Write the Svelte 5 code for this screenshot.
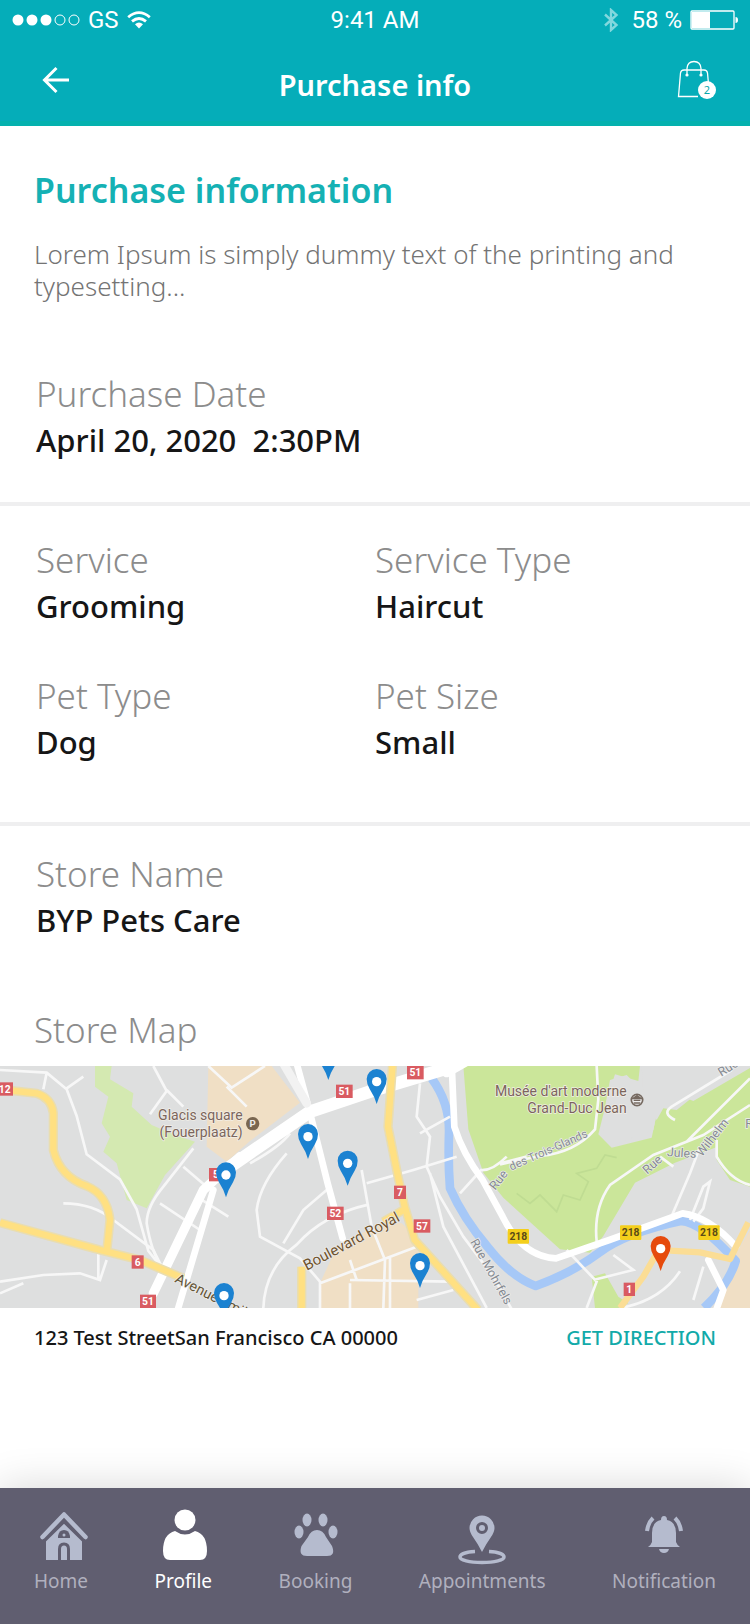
<script>
  const details = [
    { label: 'Service', value: 'Grooming' },
    { label: 'Service Type', value: 'Haircut' },
    { label: 'Pet Type', value: 'Dog' },
    { label: 'Pet Size', value: 'Small' }
  ];

  const tabs = [
    { id: 'home', label: 'Home' },
    { id: 'profile', label: 'Profile' },
    { id: 'booking', label: 'Booking' },
    { id: 'appointments', label: 'Appointments' },
    { id: 'notification', label: 'Notification' }
  ];
  let active = $state('profile');

  // Tip of each pin in map units
  const pins = [
    [678, 412], [672, 774], [985, 60], [1130, 132], [924, 297], [1043, 377], [1260, 684]
  ];
  const chosen = [1982, 633];

  const redBadges = [
    { x: 14, y: 87, w: 50, t: '12' },
    { x: 648, y: 344, w: 42, t: '5' },
    { x: 413, y: 606, w: 36, t: '6' },
    { x: 444, y: 724, w: 48, t: '51' },
    { x: 1033, y: 94, w: 50, t: '51' },
    { x: 1246, y: 38, w: 50, t: '51' },
    { x: 1200, y: 397, w: 36, t: '7' },
    { x: 1006, y: 460, w: 50, t: '52' },
    { x: 1266, y: 498, w: 50, t: '57' },
    { x: 1888, y: 688, w: 34, t: '1' }
  ];
  const yellowBadges = [
    { x: 1555, y: 529 }, { x: 1892, y: 518 }, { x: 2127, y: 518 }
  ];
</script>

<div class="page">
  <header>
    <div class="status">
      <div class="carrier">
        <svg width="68" height="14" viewBox="0 0 68 14" aria-hidden="true">
          <g fill="#fff"><circle cx="6" cy="7" r="5.5" /><circle cx="20" cy="7" r="5.5" /><circle cx="34" cy="7" r="5.5" /></g>
          <g fill="none" stroke="#fff"><circle cx="48" cy="7" r="5" /><circle cx="62" cy="7" r="5" /></g>
        </svg>
        <span>GS</span>
        <svg width="24" height="18" viewBox="0 0 24 18" aria-hidden="true">
          <g fill="none" stroke="#fff" stroke-width="2.8"><path d="M1.2 6.2Q12-3 22.8 6.2" /><path d="M5 10.4Q12 4.6 19 10.4" /></g>
          <path d="M8 13.2Q12 10 16 13.2L12 17.6Z" fill="#fff" />
        </svg>
      </div>
      <span class="clock">9:41 AM</span>
      <div class="power">
        <svg width="16" height="24" viewBox="0 0 16 24" aria-hidden="true">
          <path d="M2 6.5 13.5 17 8 22V2l5.5 5L2 17.5" fill="none" stroke="#82d8de" stroke-width="2.400" />
        </svg>
        <span>58 %</span>
        <svg width="48" height="20" viewBox="0 0 48 20" aria-hidden="true">
          <rect x="1" y="1" width="43" height="18" rx="1" fill="none" stroke="#fff" stroke-width="1.3" />
          <path d="M1.5 2h18.500v16h-18.500z" fill="#fff" />
          <path d="M45.500 7q2.500 0 2.500 3t-2.500 3z" fill="#fff" />
        </svg>
      </div>
    </div>
    <div class="bar">
      <button class="icon-button" aria-label="Back">
        <svg width="28" height="28" viewBox="0 0 28 28"><path d="M27 14H2.500M14.500 2 2.500 14l12 12" fill="none" stroke="#fff" stroke-width="3" /></svg>
      </button>
      <h1>Purchase info</h1>
      <button class="icon-button" aria-label="Shopping bag, 2 items">
        <svg width="40" height="40" viewBox="0 0 40 40">
          <g fill="none" stroke="#fff" stroke-width="1.300">
            <path d="M22 36.500H2.500L4.500 13q.5-3 3.500-3h20q3 0 3.500 3l1 11" />
            <path d="M11 15V8.500Q11.500 1.500 18 1.500T25 8.500V15" />
          </g>
          <circle cx="11" cy="15" r="1.600" fill="#fff" /><circle cx="25" cy="15" r="1.600" fill="#fff" />
          <circle cx="31" cy="30" r="9" fill="#fff" />
          <text x="31" y="34" text-anchor="middle" font-size="11" fill="#08a7ac">2</text>
        </svg>
      </button>
    </div>
  </header>

  <main>
    <section class="intro">
      <h2>Purchase information</h2>
      <p>Lorem Ipsum is simply dummy text of the printing and typesetting...</p>
      <dl>
        <dt>Purchase Date</dt>
        <dd>April 20, 2020&nbsp; 2:30PM</dd>
      </dl>
    </section>

    <section class="details">
      {#each details as item}
        <dl>
          <dt>{item.label}</dt>
          <dd>{item.value}</dd>
        </dl>
      {/each}
    </section>

    <section class="store">
      <dl>
        <dt>Store Name</dt>
        <dd>BYP Pets Care</dd>
      </dl>
      <h3>Store Map</h3>
    </section>

    <svg class="map" viewBox="0 18 2250 726" preserveAspectRatio="xMidYMid slice" role="img" aria-label="Store map">
      <rect y="18" width="2250" height="726" fill="#dedfdf" />
      <!-- Parks -->
      <g fill="#cbe69a">
        <path fill="#d4e9b1" d="M285 18h50l-5 40 70 42-5 40 60 55 70 30 60 20-90 100-55 100-60-25-30-110-40-35 20-45-25-40 20-80-40-30z" />
        <path d="M1390 18h530l-5 45-70-20-20 60-30 120 40 40 120-30 15-70 60-60 50 20 180-105h90v55l-95 65-70 110-160 60-120 60-95 160-40 50-90-10-170-155-60-75-45-130z" />
        <path d="M2250 70v310l-60-20-40-60v-60l50-80z" />
        <path d="M1775 650l40-10 40 70 30 20-30 14h-70z" />
      </g>
      <path d="M1830 60l50-15 60 60 30 55-10 50-115 42-35-30 5-80zM1925 18h270l-165 132-40-5-20 35-40-80z" fill="#dedfdf" />
      <path d="M1550 400l40 30 30-25 50 50 20-50 50 15 25-55-35-25 60-15 25-40 35 8" fill="none" stroke="#bfdc92" stroke-width="5" />
      <!-- Built-up blocks -->
      <g fill="#f0dfc5">
        <path d="M625 18h190l85 110-150 115-70 62-60-45z" />
        <path d="M1010 560l140-75 55 5 50 45v209H960v-74z" />
        <path d="M2250 510v234h-110l60-150z" />
      </g>
      <!-- River -->
      <g fill="none" stroke="#a6c8f7" stroke-linejoin="round">
        <path stroke-width="26" d="M1295 55q55 75 52 165t3 165q40 90 112 175 70 90 145 118 110-40 190-100t245-95q60 2 165 120-20 70-95 141" />
      </g>
      <!-- Side streets -->
      <g fill="none" stroke="#f7f7f7" stroke-width="8">
        <path d="M0 30l140 8 60 50 30 80 30 115 100 75 50 90 35 125 40 50M140 38l-10 50M200 85l50-35M190 430q90 0 150 50l120 90 30 60M0 665l130-20 110-5 60 20 20-60M0 700l70-30M295 580v75" />
        <path d="M580 265l-90 115q-50 60-50 110 15 90 45 130M550 320l70 60M480 430l120 80M590 410l95 60M460 18l40 75-50 70M500 90l50 50M625 18l70 65 100-65M740 140l-60-60" />
        <path d="M750 310q90-50 120-90M860 280q-80 90-90 170l10 80 120 65 60 70v79M790 744q5-120 100-190 80-90 215-120M850 550l60-100 70-60M1085 330l30 170 40 100-5 144M960 670l290-110M1050 670v74M1170 590v154M1050 660l300 5M1250 720l110-30M1050 600l20 60" />
        <path d="M1260 70l-10 100 40 60-10 90 40 90 70 120 90 120 70 124M1370 290l-130 40-140 40M1290 340l40 160 130 244M1350 170l-90 50M1380 400l50-55M1790 18l5 100-10 90q-60 70-165 80l-120 25M1500 310l80-20" />
        <path d="M1790 545q-10-100 40-170l130-90 150-60 140-90M2250 55l-170 170-20 20M2010 480l60-140 30-80M2070 480l40-100 20-15-20 80-30 40M2150 240v50q40 70 100 85M2020 320l-40-30M1700 570l90 95-30 79M1780 660l120-30-60-45M1860 744q120-20 180-110M2080 720l30-100M2025 180q-40-20-10-40l180-110M1440 330q35 5 80-40" />
      </g>
      <!-- Main roads -->
      <g fill="none" stroke="#fff" stroke-linecap="round" stroke-linejoin="round">
        <path stroke-width="38" d="M690 320l240-165 210-70 200-60" />
        <path stroke-width="28" d="M720 290L610 390 460 700M1340 38l60-34" />
        <path stroke-width="20" d="M640 390L530 760M890 10l38 140 55 220 45 165" />
        <path stroke-width="20" d="M1355 10l8 190q25 80 85 160l60 110q60 120 160 125l160-55 220-80q80 10 160 100M2125 600l45 90-25 70" />
        <path stroke-width="26" d="M850 10l70 120" stroke="#f2f2f2" />
      </g>
      <!-- Yellow roads -->
      <g fill="none" stroke="#e9ddb0" stroke-width="28" stroke-linejoin="round">
        <path d="M0 88l110 12q45 15 50 60v110q20 80 100 108 60 25 70 100l-10 100M0 488l300 82 120 30 130 55" />
        <path d="M1178 10l-14 190 30 150 20 90 30 100 190 210M1210 450l-60 35M905 620v130" />
      </g>
      <g fill="none" stroke="#ffe082" stroke-width="19" stroke-linejoin="round">
        <path d="M0 88l110 12q45 15 50 60v110q20 80 100 108 60 25 70 100l-10 100M0 488l300 82 120 30 130 55" />
        <path d="M1178 10l-14 190 30 150 20 90 30 100 190 210M1210 450l-60 35M905 620v130" />
        <path d="M2010 572l90 5 90 20 55-110M1970 580l-40 70-70 94" stroke="#fbdd95" />
      </g>
      <!-- Route numbers -->
      <g class="route">
        {#each redBadges as b}
          <rect x={b.x - b.w / 2} y={b.y - 20} width={b.w} height="40" fill="#d95b61" />
          <text x={b.x} y={b.y + 11} fill="#fff">{b.t}</text>
        {/each}
        {#each yellowBadges as b}
          <rect x={b.x - 32} y={b.y - 22} width="64" height="44" rx="3" fill="#f4cf1c" />
          <text x={b.x} y={b.y + 11} fill="#5b4b17">218</text>
        {/each}
      </g>
      <!-- Names -->
      <g class="place" fill="#7b655c">
        <text x="728" y="180">Glacis square</text>
        <text x="728" y="232">(Fouerplaatz)</text>
        <text x="1880" y="108">Musée d'art moderne</text>
        <text x="1880" y="160">Grand-Duc Jean</text>
      </g>
      <circle cx="758" cy="191" r="20" fill="#796650" />
      <text x="758" y="202" text-anchor="middle" font-size="29" font-weight="700" fill="#eee">P</text>
      <circle cx="1911" cy="120" r="17" fill="#eee" stroke="#756960" stroke-width="5" />
      <path d="M1898 116l13-9 13 9zM1901 121h20M1901 129h20" fill="#756960" stroke="#756960" stroke-width="4" />
      <g class="street">
        <text transform="translate(522 665) rotate(27)" font-size="43" fill="#655637">Avenue Émile</text>
        <text transform="translate(920 632) rotate(-28)" font-size="45" fill="#70542e">Boulevard Royal</text>
        <text transform="translate(1486 392) rotate(-52)">Rue</text>
        <text transform="translate(1534 332) rotate(-24)" font-size="34">des Trois-Glands</text>
        <text transform="translate(1410 545) rotate(61)">Rue Mohrfels</text>
        <text transform="translate(1942 344) rotate(-42)">Rue</text>
        <text transform="translate(2000 288) rotate(4)">Jules</text>
        <text transform="translate(2106 292) rotate(-52)">Wilhelm</text>
        <text transform="translate(2164 50) rotate(-32)">Rue</text>
        <text x="2236" y="204">R</text>
      </g>
      <!-- Pins -->
      {#each pins as [x, y]}
        <g transform="translate({x} {y})">
          <path d="M0 0Q-6-22-21-45-30-59-30-75A30 30 0 0 1 30-75Q30-59 21-45 6-22 0 0Z" fill="#1b82d1" />
          <circle cy="-67" r="14" fill="#fff" />
        </g>
      {/each}
      <g transform="translate({chosen[0]} {chosen[1]})">
        <path d="M0 0Q-6-22-21-45-30-59-30-75A30 30 0 0 1 30-75Q30-59 21-45 6-22 0 0Z" fill="#e64a0c" />
        <circle cy="-67" r="14" fill="#fff" />
      </g>
    </svg>

    <div class="address">
      <address>123 Test StreetSan Francisco CA 00000</address>
      <a href="#directions">GET DIRECTION</a>
    </div>
  </main>

  <nav>
    {#each tabs as tab}
      <button class:active={active === tab.id} onclick={() => (active = tab.id)}>
        <svg width="50" height="56" viewBox="0 0 50 56" fill="currentColor" aria-hidden="true">
          {#if tab.id === 'home'}
            <g transform="translate(3 0)">
              <path d="M7 30 25 12l18 18v22H7z" />
              <path d="M3.500 30.500 25 9.500 46.500 30.500" fill="none" stroke="#605e70" stroke-width="9" />
              <path d="M3.500 29 25 6.500 46.500 29" fill="none" stroke="currentColor" stroke-width="4.500" stroke-linecap="round" stroke-linejoin="round" />
              <path d="M19 30v-2q1-6 6-6t6 6v2z" fill="#605e70" /><circle cx="25" cy="27" r="1.500" />
              <path d="M20.500 52V41q0-5 4.500-5t4.500 5v11" fill="none" stroke="#605e70" stroke-width="3" />
            </g>
          {:else if tab.id === 'profile'}
            <g transform="translate(2 0)">
              <circle cx="25" cy="12" r="10.500" />
              <path d="M15 23Q25 30 35 23 47 26 47 43 47 52 40 52H10Q3 52 3 43 3 26 15 23Z" />
            </g>
          {:else if tab.id === 'booking'}
            <g transform="translate(2 0)">
              <ellipse cx="15" cy="12" rx="4.500" ry="6.500" /><ellipse cx="31" cy="12" rx="4.500" ry="6.500" />
              <ellipse cx="7" cy="24" rx="4.500" ry="6.500" /><ellipse cx="41" cy="24" rx="4.500" ry="6.500" />
              <path d="M25 22Q31 22 34 29L40 38Q44 48 35 48H15Q6 48 9.500 38L16 29Q19 22 25 22Z" />
            </g>
          {:else if tab.id === 'appointments'}
            <path fill-rule="evenodd" d="M25 44Q21 36 16 29 12.500 24 12.500 20A12.500 12.500 0 0 1 37.500 20Q37.500 24 34 29 29 36 25 44ZM25 14A6 6 0 1 0 25 26 6 6 0 1 0 25 14Z" />
            <circle cx="25" cy="20" r="3" />
            <path d="M18 43.500C9 44 3 46 3 49s9 5.500 22 5.500S47 52 47 49s-6-5-15-5.500" fill="none" stroke="currentColor" stroke-width="3.500" />
          {:else}
            <path d="M25 8q3 0 3 4 9 2 9 13v9q1 3 4 5H9q3-2 4-5v-9q0-11 9-13 0-4 3-4ZM20 41h10q-1 4-5 4t-5-4Z" />
            <path d="M14 10q-5 5-6 13M36 10q5 5 6 13" fill="none" stroke="currentColor" stroke-width="4" />
          {/if}
        </svg>
        <span>{tab.label}</span>
      </button>
    {/each}
  </nav>
</div>

<style>
  :global(body) { margin: 0; }
  * { box-sizing: border-box; }
  .page {
    min-height: 100vh;
    display: flex;
    flex-direction: column;
    background: #fff;
    color: #161616;
    font-family: "Noto Sans", "Open Sans", sans-serif;
    overflow-x: hidden;
  }
  h1, h2, h3, p, dl, dd { margin: 0; font-weight: 400; }
  button { border: 0; padding: 0; background: none; font: inherit; color: inherit; cursor: pointer; }
  svg { display: block; }

  header { height: 126px; background: #05adb9; border-bottom: 5px solid #04b1ae; color: #fff; }
  .status {
    display: grid;
    grid-template-columns: 1fr auto 1fr;
    align-items: center;
    height: 40px;
    padding: 0 12px;
    font: 24px/40px Roboto, sans-serif;
  }
  .carrier, .power { display: flex; align-items: center; gap: 8px; }
  .power { justify-content: flex-end; }
  .power span { margin-left: 4px; }
  .bar {
    display: grid;
    grid-template-columns: 1fr auto 1fr;
    align-items: center;
    height: 80px;
    padding: 0 34px;
  }
  .icon-button { justify-self: start; margin-left: 8px; }
  .icon-button:last-child { justify-self: end; }
  h1 { font-size: 29px; font-weight: 600; line-height: 40px; padding-top: 10px; }

  main { flex: 1; }
  .intro { padding: 40px 34px; border-bottom: 4px solid #efeff0; }
  h2 { font-size: 34px; font-weight: 600; line-height: 48px; color: #15b1b4; }
  p { margin: 24px 0 68px; font-size: 26px; line-height: 32px; color: #747474; font-weight: 300; }
  dl { padding-left: 2px; }
  dt, h3 { font-size: 35px; line-height: 48px; font-weight: 300; color: #8c8c8c; }
  dd { font-size: 31px; line-height: 44px; font-weight: 500; }
  .details {
    display: grid;
    grid-template-columns: 1fr 1fr;
    row-gap: 44px;
    padding: 30px 36px 58px;
    border-bottom: 4px solid #efeff0;
  }
  .details dl { padding-left: 0; }
  .store { padding: 24px 34px 12px; }
  h3 { margin-top: 64px; }
  .map { width: 100%; height: auto; font-family: Roboto, sans-serif; }
  .map g g { color: inherit; }
  .route text { font-size: 31px; font-weight: 700; text-anchor: middle; }
  .place text { font-size: 42px; text-anchor: end; stroke: #f2efe8; stroke-width: 4; paint-order: stroke; }
  .street { font-size: 37px; fill: #858a91; stroke: #eee; stroke-width: 4; paint-order: stroke; }
  .address {
    display: flex;
    justify-content: space-between;
    padding: 14px 34px;
    font-size: 20px;
    line-height: 32px;
    font-weight: 500;
  }
  address { font-style: normal; }
  .address a { color: #12aaa9; text-decoration: none; }

  nav {
    display: flex;
    justify-content: space-between;
    height: 136px;
    padding: 20px 34px;
    background: #605e70;
    box-shadow: 0 0 40px rgba(0, 0, 0, 0.16);
    color: #b5bbce;
  }
  nav button { display: flex; flex-direction: column; align-items: center; }
  nav svg { overflow: visible; }
  nav span { font-size: 19px; line-height: 34px; color: #b0b0be; }
  nav .active, nav .active span { color: #fff; }
</style>
